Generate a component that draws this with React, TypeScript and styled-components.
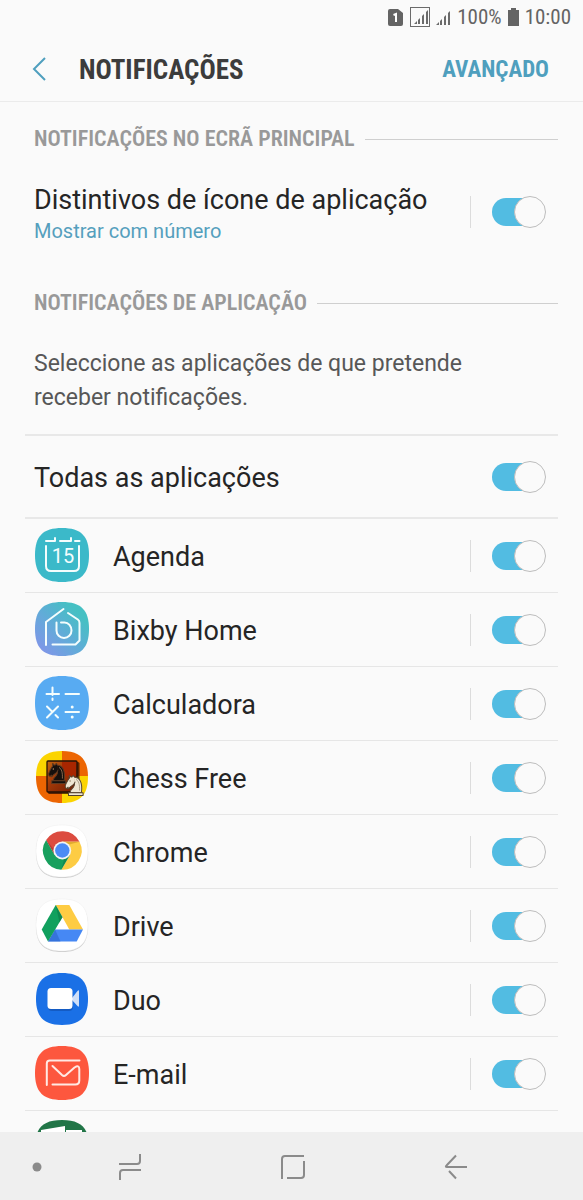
import React, { useState } from "react";
import styled, { createGlobalStyle } from "styled-components";

const GlobalStyle = createGlobalStyle`
  *, *::before, *::after { box-sizing: border-box; }
  body {
    margin: 0;
    background: #fafafa;
    font-family: Roboto, sans-serif;
    color: #252525;
  }
`;

const condensed = `"Roboto Condensed", "Liberation Sans Narrow", Roboto, sans-serif`;

const Screen = styled.div`
  display: flex;
  flex-direction: column;
  height: 100vh;
  background: #fafafa;
`;

const StatusBar = styled.div`
  display: flex;
  align-items: center;
  justify-content: flex-end;
  height: 34px;
  padding: 0 12px;
  gap: 6px;
  font-family: ${condensed};
  font-size: 21px;
  line-height: 24px;
  color: #646464;
`;

const Header = styled.header`
  display: flex;
  align-items: center;
  height: 68px;
  padding: 2px 34px 0 25px;
  border-bottom: 1px solid #ebebeb;
`;

const PlainButton = styled.button`
  display: flex;
  align-items: center;
  justify-content: center;
  padding: 0;
  border: 0;
  background: none;
  cursor: pointer;
`;

const BackButton = styled(PlainButton)`
  width: 28px;
  height: 40px;
`;

const Title = styled.h1`
  flex: 1;
  margin: 0 0 0 26px;
  padding-top: 2px;
  font-family: ${condensed};
  font-size: 27px;
  line-height: 36px;
  font-weight: 700;
  color: #3c3c3c;
`;

const AdvancedButton = styled(PlainButton)`
  padding-top: 2px;
  font-family: ${condensed};
  font-size: 23px;
  line-height: 32px;
  font-weight: 700;
  color: #4f9fbe;
`;

const Content = styled.main`
  flex: 1;
  min-height: 0;
  padding: 6px 25px 0;
  overflow-y: auto;
  scrollbar-width: none;
`;

const SectionTitle = styled.h2`
  display: flex;
  align-items: center;
  gap: 10px;
  margin: 0;
  padding: 18px 0 0 9px;
  font-family: ${condensed};
  font-size: 22px;
  line-height: 26px;
  font-weight: 600;
  color: #999;

  &::after {
    content: "";
    flex: 1;
    height: 1px;
    background: #cfcfcf;
  }
`;

const Setting = styled.div<{ $height: number; $strong?: boolean }>`
  display: flex;
  align-items: center;
  height: ${(p) => p.$height}px;
  padding: 0 12px 0 9px;
  border-bottom: ${(p) => (p.$strong ? "2px solid #e8e8e8" : "0")};
`;

const Texts = styled.div`
  flex: 1;
  padding-top: 2px;
`;

const Label = styled.label`
  display: block;
  flex: 1;
  padding-top: 2px;
  font-size: 27px;
  line-height: 34px;
`;

const Value = styled.div`
  font-size: 20px;
  line-height: 28px;
  color: #559fbd;
`;

const Hint = styled.p`
  margin: 0;
  padding: 31px 48px 19px 9px;
  border-bottom: 2px solid #e8e8e8;
  font-size: 23px;
  line-height: 34px;
  color: #575757;
`;

const AppList = styled.ul`
  margin: 0;
  padding: 0;
  list-style: none;
`;

const AppRow = styled.li`
  display: flex;
  align-items: center;
  height: 74px;
  padding: 0 12px 0 9px;
  border-bottom: 1px solid #e6e6e6;

  ${Label} {
    margin-left: 23px;
  }
`;

const Divider = styled.span`
  width: 1px;
  height: 32px;
  margin-right: 21px;
  background: #dcdcdc;
`;

const Switch = styled.input`
  appearance: none;
  display: grid;
  flex: none;
  align-items: center;
  width: 54px;
  height: 32px;
  margin: 0;
  cursor: pointer;

  &::before,
  &::after {
    content: "";
    grid-area: 1 / 1;
  }
  &::before {
    width: 50px;
    height: 28px;
    border-radius: 14px;
    background: #c4c4c4;
  }
  &::after {
    width: 32px;
    height: 32px;
    border: 1px solid #bdbdbd;
    border-radius: 50%;
    background: #fafafa;
  }
  &:checked::before {
    width: 44px;
    background: #52bce2;
  }
  &:checked::after {
    justify-self: end;
  }
`;

const NavBar = styled.nav`
  display: grid;
  grid-template-columns: 22px repeat(3, 1fr);
  flex: none;
  height: 68px;
  padding: 2px 46px 0 26px;
  background: #efefef;
`;

const NavButton = styled(PlainButton)`
  height: 66px;
`;

const AppIcon = styled.svg.attrs({ viewBox: "0 0 56 56", "aria-hidden": true })`
  flex: none;
  width: 56px;
  height: 56px;
  margin-bottom: 2px;
`;

const TILE = "M28 1C47 1 55 9 55 28S47 55 28 55 1 47 1 28 9 1 28 1Z";
const CARD = "M28 2C46 2 54 10 54 28S46 54 28 54 2 46 2 28 10 2 28 2Z";

const line = {
  fill: "none",
  stroke: "#f4fdfd",
  strokeWidth: 2,
  strokeLinecap: "round" as const,
  strokeLinejoin: "round" as const,
};

const WhiteCard = () => (
  <>
    <path d={CARD} fill="#c9c9c9" transform="translate(0 1)" />
    <path d={CARD} fill="#fff" stroke="#ececec" strokeWidth="0.5" />
  </>
);

const Agenda = () => (
  <AppIcon>
    <path d={TILE} fill="#3bb9c9" />
    <g {...line}>
      <path d="M12 14h9v-3M26 14h11v-3M41 14h4.500" />
      <path d="M12 19v20q0 5 5 5h23q5 0 5-5V19" />
    </g>
    <text x="29" y="36" textAnchor="middle" fill="#f4fdfd" fontFamily="Roboto" fontSize="20">15</text>
  </AppIcon>
);

const Bixby = () => (
  <AppIcon>
    <defs>
      <linearGradient id="bixby" x1="0" y1="1" x2="1" y2="0">
        <stop offset="0.1" stopColor="#8096e8" />
        <stop offset="0.5" stopColor="#5eaed6" />
        <stop offset="0.8" stopColor="#45c0c3" />
      </linearGradient>
    </defs>
    <path d={TILE} fill="url(#bixby)" />
    <g {...line}>
      <path d="M12 44V21L29.500 8M34 12l9.800 6.500q1.700 1.200 1.700 3.500V39.500l-4 4H18.500" />
      <path d="M22.500 21.500V29.500a7.500 7.500 0 0 0 15 0c0-4.500-3-8-7-8h-3.500" />
    </g>
  </AppIcon>
);

const Calculator = () => (
  <AppIcon>
    <path d={TILE} fill="#58abf2" />
    <g {...line}>
      <path d="M12.500 19h12.500M18.500 12.500V20M18.500 23.500v1.500M31.500 19h13.500" />
      <path d="M13 42.500L24 31.500M13 31.500l5 5M21.500 40l2.500 2.500M31.500 37h13.500" />
    </g>
    <circle cx="38.200" cy="32" r="1.500" fill="#f4fdfd" />
    <circle cx="38.200" cy="42" r="1.500" fill="#f4fdfd" />
  </AppIcon>
);

const Knight = ({ fill, stroke, eye }: { fill: string; stroke: string; eye: string }) => (
  <g fill={fill} stroke={stroke} strokeWidth="1.800" strokeLinejoin="round">
    <path d="M22 10c10.500 1 16.500 8 14 28H15c0-9 10-6.500 8-20" />
    <path d="M24 18c.4 2.900-5.500 7.400-8 9-3 2-2.800 4.300-5 4-1-.9 1.400-3 0-3-1 0 .2 1.200-1 2-1 0-4 1-4-4 0-2 6-12 6-12s1.900-1.900 2-3.500c-.7-1-.5-2-.5-3 1-1 3 2.500 3 2.500h2s.8-2 2.500-3c1 0 1 3 1 3" />
    <path d="M12 38h27v5H12z" />
    <circle cx="15" cy="17" r="1.300" fill={eye} stroke="none" />
    <path d="M26 14c5 3 7 9 6.500 20" fill="none" stroke={eye} strokeWidth="1.200" />
  </g>
);

const Chess = () => (
  <AppIcon>
    <defs>
      <clipPath id="chess">
        <path d={CARD} />
      </clipPath>
      <linearGradient id="board" x1="0" y1="0" x2="1" y2="1">
        <stop offset="0" stopColor="#c4660f" />
        <stop offset="0.4" stopColor="#a23a08" />
        <stop offset="1" stopColor="#6e1a02" />
      </linearGradient>
    </defs>
    <g clipPath="url(#chess)">
      <path d="M0 0h28v27H0zM28 27h28v29H28z" fill="#fbd400" />
      <path d="M28 0h28v27H28zM0 27h28v29H0z" fill="#ec6502" />
      <rect x="14" y="13" width="31.500" height="32" rx="1.500" fill="#2b0d02" opacity="0.75" />
      <rect x="13" y="12" width="30" height="31" rx="1" fill="url(#board)" stroke="#241006" strokeWidth="1.300" />
      <path d="M28 13h14v14H28z" fill="#a82600" />
    </g>
    <g transform="translate(11.500 10.500) scale(0.520 0.560)">
      <Knight fill="#15100d" stroke="#5d3a22" eye="#c79a70" />
    </g>
    <g transform="translate(28 22.500) scale(0.540 0.560)">
      <Knight fill="#efe6d2" stroke="#54422e" eye="#8d7a60" />
    </g>
  </AppIcon>
);

const Chrome = () => (
  <AppIcon>
    <WhiteCard />
    <g transform="translate(28.300 27.500)">
      <path d="M-16.200-10.500A19.300 19.300 0 0 1 17.200-8.800H0L-7.620 4.400Z" fill="#dc4c40" />
      <path d="M17.200-8.800A19.300 19.300 0 0 1-.98 19.300L7.620 4.400 0-8.800Z" fill="#fdcc44" />
      <path d="M-.98 19.300A19.300 19.300 0 0 1-16.200-10.500L-7.620 4.400H7.620Z" fill="#18a05e" />
      <path d="M-16.200-10.500L-7.620 4.400l-1-6Z" fill="#962f2f" opacity="0.5" />
      <path d="M0-8.800H17.200L7-6Z" fill="#c68a1c" opacity="0.5" />
      <path d="M-.98 19.300L7.620 4.400 2 8Z" fill="#0e6b3d" opacity="0.4" />
      <circle r="8.900" fill="#f4f4f4" />
      <circle r="7.200" fill="#4b8bf5" />
    </g>
  </AppIcon>
);

const Drive = () => (
  <AppIcon>
    <WhiteCard />
    <path d="M21.700 8h13.600L49 32.500H35.300Z" fill="#fecc43" />
    <path d="M21 32.500h28l-6.300 12H14Z" fill="#4688f4" />
    <path d="M21 32.500L14 44.500l12.500 0Z" fill="#2a62c9" opacity="0.55" />
    <path d="M21.700 8l6.800 12.300L14 44.500 7.700 32.500Z" fill="#11a05e" />
    <path d="M21.700 8l6.800 12.300-3 5Z" fill="#0b7040" opacity="0.5" />
  </AppIcon>
);

const Duo = () => (
  <AppIcon>
    <path d={CARD} fill="#1a70e6" />
    <rect x="14" y="19" width="25" height="21" rx="4" fill="#1253b4" opacity="0.7" />
    <path d="M38 27l5.500-7q1.500-1.500 1.500.5v14q0 2-1.500.5L38 29Z" fill="#cfdff8" />
    <rect x="13.500" y="17" width="25" height="21" rx="3.500" fill="#fff" />
  </AppIcon>
);

const Email = () => (
  <AppIcon>
    <path d={TILE} fill="#fd573e" />
    <g {...line} stroke="#ffe9e4">
      <path d="M12.800 40V18.500q0-3 3-3H45.500" />
      <path d="M18.500 21L28 30q2 1.800 4 0l8.500-7.500q4.800-3 4.800 1.500V35.500q0 4-4 4H18.500" />
    </g>
  </AppIcon>
);

const Excel = () => (
  <AppIcon>
    <path d={TILE} fill="#217547" />
    <path d="M7 11l24-4v40L7 43Z" fill="#fff" />
    <path d="M32 11h16v32H32Z" fill="#fff" />
  </AppIcon>
);

const apps: { name: string; Icon: () => React.JSX.Element }[] = [
  { name: "Agenda", Icon: Agenda },
  { name: "Bixby Home", Icon: Bixby },
  { name: "Calculadora", Icon: Calculator },
  { name: "Chess Free", Icon: Chess },
  { name: "Chrome", Icon: Chrome },
  { name: "Drive", Icon: Drive },
  { name: "Duo", Icon: Duo },
  { name: "E-mail", Icon: Email },
  { name: "Excel", Icon: Excel },
];

const SignalBars = () => (
  <path d="M0 14l3-3v3zM4 10l2-2v6H4zM8 6l2-2v10H8zM12 2l2-2v14h-2z" fill="#6b6b6b" />
);

const StatusIcons = () => (
  <svg width="64" height="22" viewBox="0 0 64 22" aria-hidden="true">
    <path d="M3 3h8l5 4v11q0 2-2 2H3q-2 0-2-2V5q0-2 2-2Z" fill="#646464" />
    <path d="M6.500 9L9 8v8" fill="none" stroke="#fff" strokeWidth="2" />
    <rect x="23.500" y="1.500" width="19" height="19" fill="none" stroke="#6b6b6b" />
    <g transform="translate(27 4)"><SignalBars /></g>
    <g transform="translate(49 5)"><SignalBars /></g>
  </svg>
);

export default function App() {
  const [off, setOff] = useState<string[]>([]);
  const switchProps = (id: string) => ({
    id,
    type: "checkbox",
    checked: !off.includes(id),
    onChange: () => setOff((o) => (o.includes(id) ? o.filter((x) => x !== id) : [...o, id])),
  });

  return (
    <Screen>
      <GlobalStyle />
      <StatusBar>
        <StatusIcons />
        <span>100%</span>
        <svg width="11" height="18" viewBox="0 0 11 18" aria-hidden="true">
          <path d="M3 0h5v2h3v16H0V2h3z" fill="#646464" />
        </svg>
        <span>10:00</span>
      </StatusBar>
      <Header>
        <BackButton aria-label="Voltar">
          <svg width="16" height="24" viewBox="0 0 16 24" fill="none" stroke="#4f9fbe" strokeWidth="2">
            <path d="M14 1L3 12l11 11" />
          </svg>
        </BackButton>
        <Title>NOTIFICAÇÕES</Title>
        <AdvancedButton>AVANÇADO</AdvancedButton>
      </Header>
      <Content>
        <SectionTitle>NOTIFICAÇÕES NO ECRÃ PRINCIPAL</SectionTitle>
        <Setting $height={120}>
          <Texts>
            <Label htmlFor="badges">Distintivos de ícone de aplicação</Label>
            <Value>Mostrar com número</Value>
          </Texts>
          <Divider />
          <Switch {...switchProps("badges")} />
        </Setting>
        <SectionTitle>NOTIFICAÇÕES DE APLICAÇÃO</SectionTitle>
        <Hint>Seleccione as aplicações de que pretende receber notificações.</Hint>
        <Setting $height={83} $strong>
          <Label htmlFor="all">Todas as aplicações</Label>
          <Switch {...switchProps("all")} />
        </Setting>
        <AppList>
          {apps.map(({ name, Icon }) => (
            <AppRow key={name}>
              <Icon />
              <Label htmlFor={name}>{name}</Label>
              <Divider />
              <Switch {...switchProps(name)} />
            </AppRow>
          ))}
        </AppList>
      </Content>
      <NavBar>
        <NavButton aria-label="Ocultar barra">
          <svg width="10" height="10" viewBox="0 0 10 10">
            <circle cx="5" cy="5" r="4.500" fill="#8b8b8b" />
          </svg>
        </NavButton>
        <NavButton aria-label="Recentes">
          <svg width="24" height="28" viewBox="0 0 24 28" fill="none" stroke="#8b8b8b" strokeWidth="2">
            <path d="M1 11h18q3 0 3-3V1M2 27v-7q0-3 3-3h18" />
          </svg>
        </NavButton>
        <NavButton aria-label="Início">
          <svg width="26" height="26" viewBox="0 0 26 26" fill="none" stroke="#8b8b8b" strokeWidth="2">
            <path d="M2 25V5q0-3 3-3h19M24 7v14q0 3-3 3H7" />
          </svg>
        </NavButton>
        <NavButton aria-label="Retroceder">
          <svg width="24" height="26" viewBox="0 0 24 26" fill="none" stroke="#8b8b8b" strokeWidth="2">
            <path d="M12 1.500L2.500 11.500Q1 13 3 13H23M5 17l7 7.500" />
          </svg>
        </NavButton>
      </NavBar>
    </Screen>
  );
}
